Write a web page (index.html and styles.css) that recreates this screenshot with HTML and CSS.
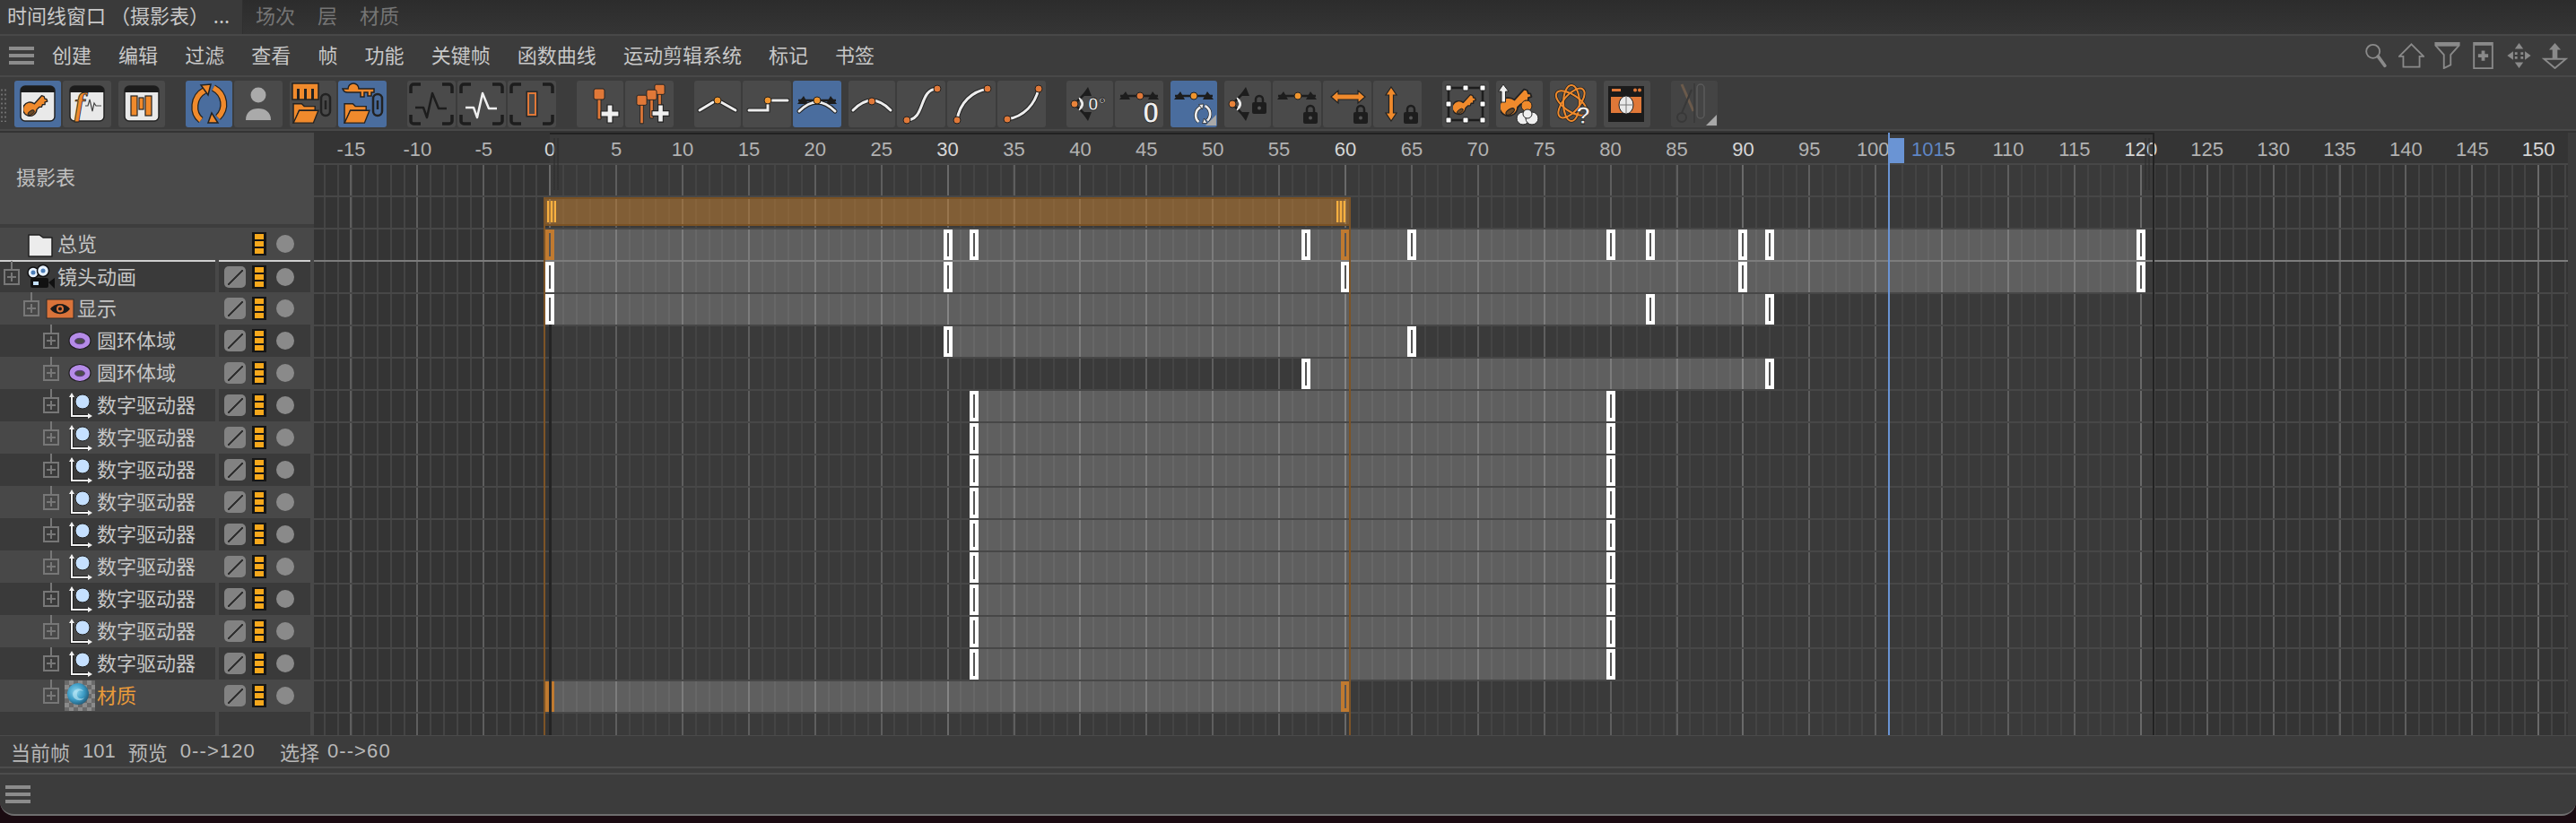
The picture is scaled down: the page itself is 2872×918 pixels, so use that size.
FILE: index.html
```html
<!DOCTYPE html>
<html lang="zh-CN">
<head>
<meta charset="utf-8">
<title>时间线窗口</title>
<link rel="stylesheet" href="styles.css">
</head>
<body>
<svg class="defs" width="0" height="0" aria-hidden="true">
  <defs>
    <symbol id="key" viewBox="0 0 32 32">
      <path d="M13 13 22 3l3 1 1 3 2 0 1 3-3 1 0 3-3 0-1 3-3 0-3 3A8.500 8.500 0 1 1 13 13Z" fill="#f08a2c" stroke="#222" stroke-width="1.500" stroke-linejoin="round"/>
      <ellipse cx="9" cy="24" rx="4.500" ry="2.200" transform="rotate(-35 9 24)" fill="#6b4a28" stroke="#222"/>
    </symbol>
    <symbol id="win" viewBox="0 0 54 52">
      <rect x="8" y="6" width="38" height="39" rx="5" fill="#e9e9e9" stroke="#222" stroke-width="1.500"/>
      <path d="M8 13v-2a5 5 0 0 1 5-5h28a5 5 0 0 1 5 5v2z" fill="#1c1c1c"/>
    </symbol>
    <symbol id="cycle" viewBox="0 0 52 52">
      <g fill="none" stroke="#222" stroke-width="8"><path d="M21 11C8 18 7 36 17 44"/><path d="M31 8C44 15 46 31 36 41"/></g>
      <g fill="none" stroke="currentColor" stroke-width="5.500"><path d="M21 11C8 18 7 36 17 44"/><path d="M31 8C44 15 46 31 36 41"/></g>
      <path d="M17 5 28 4 25 16Z" fill="currentColor" stroke="#222" stroke-width="1.500"/>
      <path d="M36 47 25 47 29 36Z" fill="currentColor" stroke="#222" stroke-width="1.500"/>
    </symbol>
    <symbol id="folder" viewBox="0 0 34 28">
      <path d="M2 26V3h10l3 3h13v5H9L3 26Z" fill="#f08a2c" stroke="#222" stroke-width="1.500"/>
      <path d="M9 11h23l-6 15H2Z" fill="#f08a2c" stroke="#222" stroke-width="1.500"/>
    </symbol>
    <symbol id="chain" viewBox="0 0 14 28">
      <rect x="2" y="2" width="10" height="24" rx="5" fill="none" stroke="#222" stroke-width="2.500"/>
      <path d="M7 9v10" stroke="#222" stroke-width="2.500"/>
    </symbol>
    <symbol id="brackets" viewBox="0 0 54 52">
      <path d="M15 4H7a3 3 0 0 0-3 3v7M39 4h8a3 3 0 0 1 3 3v7M4 38v7a3 3 0 0 0 3 3h8M50 38v7a3 3 0 0 1-3 3h-8" fill="none" stroke="#1d1d1d" stroke-width="3.500"/>
    </symbol>
    <symbol id="lock" viewBox="0 0 18 24">
      <path d="M5 11V7a4 4 0 0 1 8 0v4" fill="none" stroke="#1d1d1d" stroke-width="2.500"/>
      <rect x="1" y="10" width="16" height="13" rx="2" fill="#1d1d1d"/>
      <circle cx="9" cy="16.500" r="2" fill="#555"/>
    </symbol>
    <symbol id="plus" viewBox="0 0 24 24">
      <path d="M9 2h6v7h7v6h-7v7H9v-7H2V9h7Z" fill="#efefef" stroke="#222" stroke-width="1.200"/>
    </symbol>
    <symbol id="pin" viewBox="0 0 14 36">
      <path d="M5 12h4v23H5Z" fill="#e07838" stroke="#222"/>
      <rect x="1" y="1" width="12" height="12" rx="2" fill="#e07838" stroke="#222"/>
    </symbol>
    <symbol id="exts" viewBox="0 0 54 52">
      <path d="M6 17H48" stroke="#1d1d1d" stroke-width="2.500"/>
      <path d="M5 21 12 12 17 21ZM49 21 42 12 37 21Z" fill="#1d1d1d"/>
    </symbol>
    <symbol id="angle" viewBox="0 0 54 52">
      <path d="M11 25 24 12M11 27 24 40" stroke="#1d1d1d" stroke-width="2.500"/>
      <path d="M25 7 18 17 29 17ZM25 45 18 35 29 35Z" fill="#1d1d1d"/>
      <path d="M15 19C21 22 21 30 15 33L18 26Z" fill="#eee" stroke="#eee"/>
      <circle cx="10" cy="26" r="4" fill="#e8833a" stroke="#222"/>
    </symbol>
    <symbol id="corner" viewBox="0 0 12 12"><path d="M12 0V12H0Z" fill="#a8a8a8"/></symbol>
    <symbol id="torus" viewBox="0 0 34 34">
      <ellipse cx="17" cy="17" rx="12" ry="9.500" fill="#b58be8" stroke="#1e1e1e" stroke-width="1.200"/>
      <ellipse cx="17" cy="17.500" rx="5.500" ry="3.200" fill="#4c4c4c" stroke="#5c3d85"/>
    </symbol>
    <symbol id="driver" viewBox="0 0 34 34">
      <path d="M8 5V29H28" fill="none" stroke="#222" stroke-width="4"/>
      <path d="M8 5V29H28" fill="none" stroke="#f2f2f2" stroke-width="2"/>
      <path d="M5 8 8 3 11 8ZM26 26 31 29 26 32Z" fill="#f2f2f2"/>
      <circle cx="20" cy="13" r="8" fill="#c5e0ff" stroke="#222" stroke-width="1"/>
    </symbol>
    <symbol id="wave" viewBox="0 0 54 52">
      <path d="M9 30h9l4 11 6-27 7 17h9" fill="none" stroke-linejoin="round"/>
    </symbol>
    <pattern id="checker" width="10" height="10" patternUnits="userSpaceOnUse">
      <rect width="10" height="10" fill="#8b8b8b"/>
      <rect width="5" height="5" fill="#6a6a6a"/>
      <rect x="5" y="5" width="5" height="5" fill="#6a6a6a"/>
    </pattern>
    <radialGradient id="ball" cx=".4" cy=".4" r=".7">
      <stop offset="0" stop-color="#8fd6ee"/>
      <stop offset=".55" stop-color="#3b9ac4"/>
      <stop offset="1" stop-color="#1d4d68"/>
    </radialGradient>
  </defs>
</svg>

<div class="window">
  <div class="tabs">
    <div class="tab active">时间线窗口 （摄影表） ...</div>
    <div class="tab">场次</div>
    <div class="tab">层</div>
    <div class="tab">材质</div>
  </div>

  <div class="menu">
    <div class="burger"></div>
    <span class="menu-item">创建</span>
    <span class="menu-item">编辑</span>
    <span class="menu-item">过滤</span>
    <span class="menu-item">查看</span>
    <span class="menu-item">帧</span>
    <span class="menu-item">功能</span>
    <span class="menu-item">关键帧</span>
    <span class="menu-item">函数曲线</span>
    <span class="menu-item">运动剪辑系统</span>
    <span class="menu-item">标记</span>
    <span class="menu-item">书签</span>
    <div class="menu-tools">
      <svg class="mt" viewBox="0 0 26 32"><circle cx="10" cy="11" r="8" fill="none" stroke="#8a8a8a" stroke-width="2"/><path d="M16 17 24 28" stroke="#8a8a8a" stroke-width="4" stroke-linecap="round"/></svg>
      <svg class="mt" viewBox="0 0 32 32"><path d="M16 2 31 17H26V30H6V17H1Z" fill="none" stroke="#8a8a8a" stroke-width="2"/></svg>
      <svg class="mt" viewBox="0 0 30 32"><path d="M1 1H29V4L19 15V27L11 31V15L1 4Z" fill="none" stroke="#8a8a8a" stroke-width="2"/><path d="M1 1H29V5H1Z" fill="#8a8a8a"/></svg>
      <svg class="mt" viewBox="0 0 24 32"><path d="M1 1H23V31H1Z" fill="none" stroke="#8a8a8a" stroke-width="2"/><path d="M1 1H23V4H1ZM10 10h4v4h4v4h-4v4h-4v-4H6v-4h4Z" fill="#8a8a8a"/></svg>
      <svg class="mt" viewBox="0 0 30 32"><path d="M15 1 20 8H10ZM15 31 20 24H10ZM1 16 8 11V21ZM29 16 22 11V21ZM10 12h3v3h-3ZM17 12h3v3h-3ZM10 17h3v3h-3ZM17 17h3v3h-3Z" fill="#8a8a8a"/></svg>
      <svg class="mt" viewBox="0 0 28 32"><path d="M14 1 21 9H17V20H11V9H7Z" fill="#8a8a8a"/><path d="M1 20H27L14 31Z" fill="none" stroke="#8a8a8a" stroke-width="2"/></svg>
    </div>
  </div>

  <div class="toolbar">
    <div class="grip"></div>
    <div class="tgroup">
      <div class="btn on"><svg class="ic" viewBox="0 0 54 52"><use href="#win" width="54" height="52"/><use href="#key" x="11" y="14" width="30" height="29"/></svg></div>
      <div class="btn w"><svg class="ic" viewBox="0 0 54 52"><use href="#win" width="54" height="52"/><text class="f-glyph" x="13" y="38">f</text><path d="M25 28h3l2-7 3 13 2-9 2 3h6" fill="none" stroke="#444" stroke-width="1.200"/></svg></div>
    </div>
    <div class="tgroup">
      <div class="btn"><svg class="ic" viewBox="0 0 54 52"><use href="#win" width="54" height="52"/><g fill="#f08a2c" stroke="#222" stroke-width="1.200"><rect x="15" y="17" width="7" height="22"/><rect x="24" y="19" width="5" height="13"/><rect x="31" y="17" width="7" height="22"/></g></svg></div>
    </div>
    <div class="tgroup far">
      <div class="btn on tint-o"><svg class="ic" viewBox="0 0 54 52"><use href="#cycle" width="54" height="52"/></svg></div>
      <div class="btn w"><svg class="ic" viewBox="0 0 54 52"><circle cx="27" cy="16" r="8.500" fill="#aaa"/><path d="M13 44c0-9 6-13 14-13s14 4 14 13z" fill="#aaa"/></svg></div>
    </div>
    <div class="tgroup">
      <div class="btn"><svg class="ic" viewBox="0 0 54 52"><rect x="4" y="3" width="29" height="18" fill="#f08a2c" stroke="#222" stroke-width="1.500"/><path d="M9 21V9h3v12ZM17 21V9h3v12ZM25 21V9h3v12Z" fill="#222"/><use href="#folder" x="3" y="23" width="32" height="26"/><use href="#chain" x="34" y="13" width="14" height="28"/></svg></div>
      <div class="btn w on"><svg class="ic" viewBox="0 0 54 52"><path d="M5 9h6a6 6 0 0 1 12 0h17v4h-3v4h-4v-4h-4v5h-4v-5H11a6 6 0 0 1-6-4z" fill="#f08a2c" stroke="#222" stroke-width="1.500"/><use href="#folder" x="5" y="23" width="32" height="26"/><use href="#chain" x="37" y="13" width="14" height="28"/></svg></div>
    </div>
    <div class="tgroup far">
      <div class="btn w"><svg class="ic" viewBox="0 0 54 52"><use href="#brackets" width="54" height="52"/><use href="#wave" class="w-dark" width="54" height="52"/></svg></div>
      <div class="btn w"><svg class="ic" viewBox="0 0 54 52"><use href="#brackets" width="54" height="52"/><use href="#wave" class="w-light" width="54" height="52"/></svg></div>
      <div class="btn w"><svg class="ic" viewBox="0 0 54 52"><use href="#brackets" width="54" height="52"/><rect x="21" y="12" width="12" height="28" fill="#333" stroke="#222" stroke-width="1"/><rect x="23" y="14" width="8" height="24" fill="#4b4b4b" stroke="#e07838" stroke-width="2"/></svg></div>
    </div>
    <div class="tgroup far">
      <div class="btn"><svg class="ic" viewBox="0 0 54 52"><use href="#pin" x="19" y="8" width="14" height="36"/><use href="#plus" x="26" y="25" width="24" height="24"/></svg></div>
      <div class="btn w"><svg class="ic" viewBox="0 0 54 52"><use href="#pin" x="32" y="3" width="13" height="34"/><use href="#pin" x="23" y="9" width="13" height="34"/><use href="#pin" x="12" y="14" width="13" height="36"/><use href="#plus" x="28" y="25" width="23" height="23"/></svg></div>
    </div>
    <div class="tgroup far">
      <div class="btn"><svg class="ic" viewBox="0 0 54 52"><path class="wl-o" d="M7 33 22 24M47 33 31 24"/><path class="wl-i" d="M7 33 22 24M47 33 31 24"/><circle class="dot" cx="27" cy="22" r="4"/></svg></div>
      <div class="btn w"><svg class="ic" viewBox="0 0 54 52"><path class="wl-o" d="M33 22H50M28 27V33H7"/><path class="wl-i" d="M33 22H50M28 27V33H7"/><circle class="dot" cx="28" cy="22" r="4"/></svg></div>
      <div class="btn w on"><svg class="ic" viewBox="0 0 54 52"><use href="#exts" y="5" width="54" height="52"/><path class="wl-o" d="M7 34Q27 14 47 34"/><path class="wl-i" d="M7 34Q27 14 47 34"/><circle class="dot" cx="27" cy="22" r="4"/></svg></div>
    </div>
    <div class="tgroup">
      <div class="btn"><svg class="ic" viewBox="0 0 54 52"><path class="wl-o" d="M6 33Q27 11 48 33"/><path class="wl-i" d="M6 33Q27 11 48 33"/><circle class="dot dark" cx="27" cy="23" r="4"/></svg></div>
      <div class="btn w"><svg class="ic" viewBox="0 0 54 52"><path class="wl-o" d="M11 44C32 44 24 9 45 9"/><path class="wl-i" d="M11 44C32 44 24 9 45 9"/><circle class="dot dark" cx="11" cy="44" r="4"/><circle class="dot dark" cx="45" cy="9" r="4"/></svg></div>
      <div class="btn w"><svg class="ic" viewBox="0 0 54 52"><path class="wl-o" d="M11 44C14 24 28 12 45 9"/><path class="wl-i" d="M11 44C14 24 28 12 45 9"/><circle class="dot dark" cx="11" cy="44" r="4"/><circle class="dot dark" cx="45" cy="9" r="4"/></svg></div>
      <div class="btn w"><svg class="ic" viewBox="0 0 54 52"><path class="wl-o" d="M11 43C30 40 42 26 46 9"/><path class="wl-i" d="M11 43C30 40 42 26 46 9"/><circle class="dot dark" cx="11" cy="43" r="4"/><circle class="dot dark" cx="46" cy="9" r="4"/></svg></div>
    </div>
    <div class="tgroup far">
      <div class="btn"><svg class="ic" viewBox="0 0 54 52"><use href="#angle" width="54" height="52"/><text class="zero small" x="25" y="33">0°</text></svg></div>
      <div class="btn w"><svg class="ic" viewBox="0 0 54 52"><use href="#exts" width="54" height="52"/><circle class="dot dark" cx="28" cy="17" r="4"/><text class="zero big" x="31" y="47">0</text></svg></div>
    </div>
    <div class="tgroup">
      <div class="btn on tint-w"><svg class="ic" viewBox="0 0 54 52"><use href="#exts" width="54" height="52"/><circle class="dot" cx="27" cy="17" r="4"/><use href="#cycle" x="24" y="24" width="26" height="26"/><use href="#corner" x="40" y="38" width="12" height="12"/></svg></div>
    </div>
    <div class="tgroup">
      <div class="btn"><svg class="ic" viewBox="0 0 54 52"><use href="#angle" width="54" height="52"/><use href="#lock" x="31" y="14" width="18" height="24"/></svg></div>
      <div class="btn w"><svg class="ic" viewBox="0 0 54 52"><use href="#exts" width="54" height="52"/><circle class="dot" cx="28" cy="17" r="4"/><use href="#lock" x="33" y="25" width="18" height="24"/></svg></div>
      <div class="btn w"><svg class="ic" viewBox="0 0 54 52"><path d="M9 18 17 11V15H39V11L47 18 39 25V21H17V25Z" fill="#f08a2c" stroke="#222" stroke-width="1.200"/><use href="#lock" x="33" y="25" width="18" height="24"/></svg></div>
      <div class="btn w"><svg class="ic" viewBox="0 0 54 52"><path d="M20 7 26 16H22.500V36H26L20 45 14 36H17.500V16H14Z" fill="#f08a2c" stroke="#222" stroke-width="1.200"/><use href="#lock" x="33" y="25" width="18" height="24"/></svg></div>
    </div>
    <div class="tgroup far">
      <div class="btn"><svg class="ic" viewBox="0 0 54 52"><rect x="8" y="8" width="38" height="36" fill="none" stroke="#1d1d1d" stroke-width="2.500"/><use href="#key" x="13" y="13" width="28" height="28"/><g fill="#fff" stroke="#222"><rect x="5" y="5" width="6" height="6" rx="1"/><rect x="24" y="5" width="6" height="6" rx="1"/><rect x="43" y="5" width="6" height="6" rx="1"/><rect x="5" y="23" width="6" height="6" rx="1"/><rect x="43" y="23" width="6" height="6" rx="1"/><rect x="5" y="41" width="6" height="6" rx="1"/><rect x="24" y="41" width="6" height="6" rx="1"/><rect x="43" y="41" width="6" height="6" rx="1"/></g></svg></div>
    </div>
    <div class="tgroup">
      <div class="btn"><svg class="ic" viewBox="0 0 54 52"><use href="#key" x="6" y="6" width="38" height="38"/><path d="M9 4 15 12H11.500V24H7V12H3.500Z" fill="#efefef" stroke="#222"/><circle cx="35" cy="28" r="6" fill="#f08a2c" stroke="#222"/><g fill="#efefef" stroke="#222"><circle cx="31" cy="42" r="7"/><circle cx="41" cy="42" r="7"/><circle cx="36" cy="37" r="5"/></g></svg></div>
    </div>
    <div class="tgroup">
      <div class="btn"><svg class="ic" viewBox="0 0 54 52"><g fill="none"><g stroke="#222" stroke-width="3.500"><ellipse cx="25" cy="25" rx="20" ry="9" transform="rotate(35 25 25)"/><ellipse cx="25" cy="25" rx="20" ry="9" transform="rotate(-50 25 25)"/><ellipse cx="25" cy="25" rx="20" ry="9" transform="rotate(90 25 25)"/></g><g stroke="#f08a2c" stroke-width="2"><ellipse cx="25" cy="25" rx="20" ry="9" transform="rotate(35 25 25)"/><ellipse cx="25" cy="25" rx="20" ry="9" transform="rotate(-50 25 25)"/><ellipse cx="25" cy="25" rx="20" ry="9" transform="rotate(90 25 25)"/></g></g><text class="zero q" x="30" y="48">?</text></svg></div>
    </div>
    <div class="tgroup">
      <div class="btn"><svg class="ic" viewBox="0 0 54 52"><rect x="6" y="6" width="40" height="40" fill="#1b1b1b"/><rect x="10" y="9" width="10" height="3" fill="#e07838"/><circle cx="36" cy="10.500" r="2" fill="#e07838"/><circle cx="41" cy="10.500" r="2" fill="#e07838"/><rect x="9" y="18" width="34" height="18" fill="#e07838"/><ellipse cx="26" cy="27" rx="8" ry="10" fill="#e9e9e9" stroke="#222"/><path d="M26 17V37M18 27H34" stroke="#777"/></svg></div>
    </div>
    <div class="tgroup far">
      <div class="btn faded"><svg class="ic" viewBox="0 0 54 52"><path d="M13 4 26 34" stroke="#6b5a4b" stroke-width="3"/><path d="M24 10 13 36" stroke="#383838" stroke-width="2"/><circle cx="13" cy="41" r="5" fill="none" stroke="#383838" stroke-width="2"/><path d="M27 3V47" stroke="#383838" stroke-width="1.500"/><rect x="30" y="4" width="8" height="38" rx="4" fill="none" stroke="#5a5a5a" stroke-width="1.500"/><use href="#corner" x="40" y="38" width="12" height="12"/></svg></div>
    </div>
  </div>
  <div class="rule"></div>

  <div class="sheet">
    <div class="names">
      <div class="sheet-head"><span>摄影表</span></div>

      <div class="row lite">
        <div class="name l1"><span class="exp none"></span><svg class="oi" viewBox="0 0 34 34"><path d="M4 7H16L20 10H30V31H4Z" fill="#ececec" stroke="#1f1f1f" stroke-width="1.500" stroke-linejoin="round"/></svg><span class="txt">总览</span></div>
        <div class="ctl"><span class="slash blank"></span><span class="tri"></span><span class="dotc"></span></div>
      </div>

      <div class="row dark first">
        <div class="name l1"><span class="exp"></span><svg class="oi" viewBox="0 0 34 34"><rect x="6" y="18" width="20" height="11" rx="2" fill="#111"/><path d="M26 23 33 18V30Z" fill="#111"/><rect x="9" y="22" width="6" height="4" fill="#c5e0ff"/><circle cx="9" cy="12" r="6" fill="#e8f2ff" stroke="#111" stroke-width="1.500"/><circle cx="9" cy="12" r="2.500" fill="#4d7fb8"/><circle cx="20" cy="10" r="6.500" fill="#e8f2ff" stroke="#111" stroke-width="1.500"/><circle cx="20" cy="10" r="2.500" fill="#4d7fb8"/></svg><span class="txt">镜头动画</span></div>
        <div class="ctl"><span class="slash"></span><span class="tri"></span><span class="dotc"></span></div>
      </div>

      <div class="row lite">
        <div class="name l2"><span class="exp"></span><svg class="oi" viewBox="0 0 34 34"><rect x="2" y="7" width="30" height="21" fill="#d9733a" stroke="#2a2a2a"/><path d="M6 17.500C11 10 23 10 28 17.500 23 25 11 25 6 17.500Z" fill="#1a1a1a"/><circle cx="17" cy="17.500" r="4" fill="#d9733a"/><circle cx="17" cy="17.500" r="2" fill="#1a1a1a"/></svg><span class="txt">显示</span></div>
        <div class="ctl"><span class="slash"></span><span class="tri"></span><span class="dotc"></span></div>
      </div>

      <div class="row dark">
        <div class="name l3"><span class="exp"></span><svg class="oi"><use href="#torus" width="34" height="34"/></svg><span class="txt">圆环体域</span></div>
        <div class="ctl"><span class="slash"></span><span class="tri"></span><span class="dotc"></span></div>
      </div>
      <div class="row lite">
        <div class="name l3"><span class="exp"></span><svg class="oi"><use href="#torus" width="34" height="34"/></svg><span class="txt">圆环体域</span></div>
        <div class="ctl"><span class="slash"></span><span class="tri"></span><span class="dotc"></span></div>
      </div>

      <div class="row dark">
        <div class="name l3"><span class="exp"></span><svg class="oi"><use href="#driver" width="34" height="34"/></svg><span class="txt">数字驱动器</span></div>
        <div class="ctl"><span class="slash"></span><span class="tri"></span><span class="dotc"></span></div>
      </div>
      <div class="row lite">
        <div class="name l3"><span class="exp"></span><svg class="oi"><use href="#driver" width="34" height="34"/></svg><span class="txt">数字驱动器</span></div>
        <div class="ctl"><span class="slash"></span><span class="tri"></span><span class="dotc"></span></div>
      </div>
      <div class="row dark">
        <div class="name l3"><span class="exp"></span><svg class="oi"><use href="#driver" width="34" height="34"/></svg><span class="txt">数字驱动器</span></div>
        <div class="ctl"><span class="slash"></span><span class="tri"></span><span class="dotc"></span></div>
      </div>
      <div class="row lite">
        <div class="name l3"><span class="exp"></span><svg class="oi"><use href="#driver" width="34" height="34"/></svg><span class="txt">数字驱动器</span></div>
        <div class="ctl"><span class="slash"></span><span class="tri"></span><span class="dotc"></span></div>
      </div>
      <div class="row dark">
        <div class="name l3"><span class="exp"></span><svg class="oi"><use href="#driver" width="34" height="34"/></svg><span class="txt">数字驱动器</span></div>
        <div class="ctl"><span class="slash"></span><span class="tri"></span><span class="dotc"></span></div>
      </div>
      <div class="row lite">
        <div class="name l3"><span class="exp"></span><svg class="oi"><use href="#driver" width="34" height="34"/></svg><span class="txt">数字驱动器</span></div>
        <div class="ctl"><span class="slash"></span><span class="tri"></span><span class="dotc"></span></div>
      </div>
      <div class="row dark">
        <div class="name l3"><span class="exp"></span><svg class="oi"><use href="#driver" width="34" height="34"/></svg><span class="txt">数字驱动器</span></div>
        <div class="ctl"><span class="slash"></span><span class="tri"></span><span class="dotc"></span></div>
      </div>
      <div class="row lite">
        <div class="name l3"><span class="exp"></span><svg class="oi"><use href="#driver" width="34" height="34"/></svg><span class="txt">数字驱动器</span></div>
        <div class="ctl"><span class="slash"></span><span class="tri"></span><span class="dotc"></span></div>
      </div>
      <div class="row dark">
        <div class="name l3"><span class="exp"></span><svg class="oi"><use href="#driver" width="34" height="34"/></svg><span class="txt">数字驱动器</span></div>
        <div class="ctl"><span class="slash"></span><span class="tri"></span><span class="dotc"></span></div>
      </div>

      <div class="row lite">
        <div class="name l3"><span class="exp"></span><svg class="oi" viewBox="0 0 34 34"><rect width="34" height="34" fill="url(#checker)"/><circle cx="15" cy="15" r="12" fill="url(#ball)"/><path d="M9 15C10 9 18 7 21 12 17 10 13 12 14 17 15 21 20 21 22 19 19 25 9 22 9 15Z" fill="#bfe9f6" opacity=".6"/></svg><span class="txt sel">材质</span></div>
        <div class="ctl"><span class="slash"></span><span class="tri"></span><span class="dotc"></span></div>
      </div>

      <div class="row dark tail">
        <div class="name"></div>
        <div class="ctl"></div>
      </div>
    </div>

    <div class="timeline">
      <div class="preview"></div>
      <div class="ruler">
        <span class="lbl" style="--f:-15">-15</span><span class="lbl" style="--f:-10">-10</span><span class="lbl" style="--f:-5">-5</span><span class="lbl hi" style="--f:0">0</span>
        <span class="lbl" style="--f:5">5</span><span class="lbl" style="--f:10">10</span><span class="lbl" style="--f:15">15</span><span class="lbl" style="--f:20">20</span><span class="lbl" style="--f:25">25</span><span class="lbl hi" style="--f:30">30</span>
        <span class="lbl" style="--f:35">35</span><span class="lbl" style="--f:40">40</span><span class="lbl" style="--f:45">45</span><span class="lbl" style="--f:50">50</span><span class="lbl" style="--f:55">55</span><span class="lbl hi" style="--f:60">60</span>
        <span class="lbl" style="--f:65">65</span><span class="lbl" style="--f:70">70</span><span class="lbl" style="--f:75">75</span><span class="lbl" style="--f:80">80</span><span class="lbl" style="--f:85">85</span><span class="lbl hi" style="--f:90">90</span>
        <span class="lbl" style="--f:95">95</span><span class="lbl" style="--f:99.800">100</span><span class="lbl" style="--f:105.600">5</span><span class="lbl" style="--f:110">110</span><span class="lbl" style="--f:115">115</span><span class="lbl hi" style="--f:120">120</span>
        <span class="lbl" style="--f:125">125</span><span class="lbl" style="--f:130">130</span><span class="lbl" style="--f:135">135</span><span class="lbl" style="--f:140">140</span><span class="lbl" style="--f:145">145</span><span class="lbl hi" style="--f:150">150</span>
        <span class="cursor-box"></span><span class="cursor-num">101</span>
      </div>

      <div class="track top">
        <div class="selection"><span class="sgrip"></span><span class="sgrip"></span></div>
      </div>

      <div class="track"><span class="bar" style="--a:0;--b:120"></span><span class="key o" style="--f:0"></span><span class="key" style="--f:30"></span><span class="key" style="--f:32"></span><span class="key" style="--f:57"></span><span class="key o" style="--f:60"></span><span class="key" style="--f:65"></span><span class="key" style="--f:80"></span><span class="key" style="--f:83"></span><span class="key" style="--f:90"></span><span class="key" style="--f:92"></span><span class="key" style="--f:120"></span></div>
      <div class="track first"><span class="bar" style="--a:0;--b:120"></span><span class="key" style="--f:0"></span><span class="key" style="--f:30"></span><span class="key" style="--f:60"></span><span class="key" style="--f:90"></span><span class="key" style="--f:120"></span></div>
      <div class="track"><span class="bar" style="--a:0;--b:92"></span><span class="key" style="--f:0"></span><span class="key" style="--f:83"></span><span class="key" style="--f:92"></span></div>
      <div class="track"><span class="bar" style="--a:30;--b:65"></span><span class="key" style="--f:30"></span><span class="key" style="--f:65"></span></div>
      <div class="track"><span class="bar" style="--a:57;--b:92"></span><span class="key" style="--f:57"></span><span class="key" style="--f:92"></span></div>
      <div class="track"><span class="bar" style="--a:32;--b:80"></span><span class="key" style="--f:32"></span><span class="key" style="--f:80"></span></div>
      <div class="track"><span class="bar" style="--a:32;--b:80"></span><span class="key" style="--f:32"></span><span class="key" style="--f:80"></span></div>
      <div class="track"><span class="bar" style="--a:32;--b:80"></span><span class="key" style="--f:32"></span><span class="key" style="--f:80"></span></div>
      <div class="track"><span class="bar" style="--a:32;--b:80"></span><span class="key" style="--f:32"></span><span class="key" style="--f:80"></span></div>
      <div class="track"><span class="bar" style="--a:32;--b:80"></span><span class="key" style="--f:32"></span><span class="key" style="--f:80"></span></div>
      <div class="track"><span class="bar" style="--a:32;--b:80"></span><span class="key" style="--f:32"></span><span class="key" style="--f:80"></span></div>
      <div class="track"><span class="bar" style="--a:32;--b:80"></span><span class="key" style="--f:32"></span><span class="key" style="--f:80"></span></div>
      <div class="track"><span class="bar" style="--a:32;--b:80"></span><span class="key" style="--f:32"></span><span class="key" style="--f:80"></span></div>
      <div class="track"><span class="bar" style="--a:32;--b:80"></span><span class="key" style="--f:32"></span><span class="key" style="--f:80"></span></div>
      <div class="track"><span class="bar" style="--a:0;--b:60"></span><span class="key o" style="--f:0"></span><span class="key o" style="--f:60"></span></div>
      <div class="track tail"></div>

      <span class="hatch" style="--f:0"></span>
      <span class="hatch" style="--f:120"></span>
      <span class="zero-line"></span>
      <span class="sel-line" style="--f:0"></span>
      <span class="sel-line end" style="--f:60"></span>
      <span class="end-line"></span>
      <span class="playhead"></span>
    </div>
  </div>

  <div class="status">
    <span class="s1">当前帧</span><span class="s2">101</span><span class="s3">预览</span><span class="s4">0--&gt;120</span><span class="s5">选择</span><span class="s6">0--&gt;60</span>
  </div>
  <div class="foot">
    <div class="burger"></div>
  </div>
</div>
</body>
</html>
```

FILE: styles.css
```css
* { box-sizing: border-box; }

html, body { margin: 0; padding: 0; }

body {
  width: 2872px;
  height: 918px;
  overflow: hidden;
  background: #1a0b11;
  font-family: "Noto Sans CJK SC", "Liberation Sans", sans-serif;
  font-size: 22px;
  color: #c6c6c6;
}

.defs { position: absolute; }

.window {
  width: 2872px;
  height: 910px;
  display: flex;
  flex-direction: column;
  background: #3c3c3c;
  border-bottom: 2px solid #6e6e6e;
  border-radius: 0 0 16px 16px;
  overflow: hidden;
}

/* tab strip */
.tabs {
  height: 38px;
  flex: none;
  display: flex;
  align-items: flex-start;
  background: linear-gradient(#2c2c2c, #353535);
  color: #757575;
}
.tab { margin-left: 25px; line-height: 32px; }
.tab.active {
  width: 271px;
  height: 38px;
  margin: 0 14px 0 0;
  padding-left: 8px;
  background: #3a3a3a;
  color: #c8c8c8;
  border-right: 1px solid #303030;
  white-space: pre;
  overflow: hidden;
}
.tab.active + .tab { margin-left: 0; }

/* menu */
.menu {
  height: 46px;
  flex: none;
  display: flex;
  align-items: center;
  border-top: 2px solid #484848;
  padding-left: 10px;
  color: #c8c8c8;
}
.burger {
  width: 28px;
  height: 20px;
  flex: none;
  background: repeating-linear-gradient(#8c8c8c 0 4px, transparent 4px 8px);
}
.menu .burger { margin-right: 20px; }
.menu-item { margin-right: 30.100px; padding-bottom: 5px; line-height: 30px; white-space: nowrap; }
.menu-tools {
  margin-left: auto;
  margin-right: 9px;
  display: flex;
  align-items: center;
  gap: 11px;
}
.mt { height: 30px; width: 29px; display: block; }

/* toolbar */
.toolbar {
  height: 62px;
  flex: none;
  display: flex;
  align-items: flex-start;
  border-top: 2px solid #484848;
  border-bottom: 2px solid #484848;
  padding-top: 4px;
}
.grip {
  width: 8px;
  height: 38px;
  margin-top: 8px;
  flex: none;
  background: radial-gradient(circle, #707070 1px, transparent 1.200px) 0 0 / 4px 5px;
}
.tgroup { display: flex; gap: 2px; margin-left: 8px; }
.tgroup.far { margin-left: 23px; }
.btn {
  width: 52px;
  height: 52px;
  flex: none;
  display: flex;
  align-items: center;
  justify-content: center;
  background: #4a4a4a;
  border-radius: 3px;
  color: #f08a2c;
}
.btn.w { width: 54px; }
.btn.on { background: #4a6d9e; }
.btn.tint-o { color: #f08a2c; }
.btn.tint-w { color: #ececec; }
.ic { width: 54px; height: 52px; flex: none; display: block; overflow: visible; }
.f-glyph {
  font-family: "Liberation Serif", serif;
  font-style: italic;
  font-weight: 700;
  font-size: 36px;
  fill: #f08a2c;
  stroke: #222;
  stroke-width: .8px;
}
.w-dark { fill: none; stroke: #1d1d1d; stroke-width: 2.500px; }
.w-light { fill: none; stroke: #f0f0f0; stroke-width: 2.500px; }
.wl-o { fill: none; stroke: #222; stroke-width: 5px; stroke-linecap: round; }
.wl-i { fill: none; stroke: #ededed; stroke-width: 3px; stroke-linecap: round; }
.dot { fill: #f0952e; stroke: #222; stroke-width: 1px; }
.dot.dark { fill: #e07838; }
.zero {
  font-family: "Liberation Sans", sans-serif;
  font-weight: 700;
  fill: #efefef;
  stroke: #222;
  stroke-width: .8px;
}
.zero.small { font-size: 21px; }
.zero.big { font-size: 33px; }
.zero.q { font-size: 27px; }
.faded { background: #444; }

.rule { height: 2px; flex: none; background: #333; }

/* sheet */
.sheet {
  height: 672px;
  flex: none;
  display: flex;
}
.names {
  width: 350px;
  flex: none;
  background: #484848;
}
.sheet-head {
  height: 106px;
  padding: 33px 0 0 18px;
  background: linear-gradient(#4a4a4a 102px, #3d3d3d 102px);
  line-height: 30px;
  color: #c0c0c0;
}
.row {
  height: 36px;
  display: flex;
  width: 346px;
}
.row.tail { height: 26px; }
.name {
  width: 240px;
  height: 100%;
  display: flex;
  align-items: center;
  flex: none;
  white-space: nowrap;
}
.name.l1 { padding-left: 4px; }
.name.l2 { padding-left: 26px; }
.name.l3 { padding-left: 48px; }
.txt { padding-bottom: 4px; line-height: 30px; }
.ctl {
  width: 102px;
  margin-left: 4px;
  flex: none;
  display: flex;
  align-items: center;
  padding-left: 6px;
}
.dark .name, .dark .ctl { background: #3a3a3a; }
.first .name, .first .ctl { border-top: 2px solid #cfcfcf; }
.exp {
  width: 18px;
  height: 18px;
  flex: none;
  position: relative;
  border: 2px solid #777;
  background:
    linear-gradient(#777, #777) center / 10px 2px no-repeat,
    linear-gradient(#777, #777) center / 2px 10px no-repeat;
}
.exp::before {
  content: "";
  position: absolute;
  left: 6px;
  top: -11px;
  width: 2px;
  height: 9px;
  background: #777;
}
.exp.none { border: 0; background: none; }
.exp.none::before { display: none; }
.oi { width: 34px; height: 34px; flex: none; margin: 0 2px 0 6px; display: block; }
.sel { color: #e89a3a; }
.slash {
  width: 24px;
  height: 24px;
  flex: none;
  border-radius: 5px;
  background: linear-gradient(135deg, transparent calc(50% - 1px), #303030 calc(50% - 1px), #303030 calc(50% + 1px), transparent calc(50% + 1px)) center / 17px 17px no-repeat, #828282;
}
.slash.blank { background: none; }
.tri {
  width: 16px;
  height: 26px;
  flex: none;
  margin-left: 7px;
  padding: 2px 3px;
  background: repeating-linear-gradient(#f6a81c 0 6px, #151515 6px 8px) content-box, #151515;
}
.dotc {
  width: 20px;
  height: 20px;
  flex: none;
  margin-left: 11px;
  border-radius: 50%;
  background: #8a8a8a;
}

/* timeline */
.timeline {
  --x0: 263.200px;
  --fw: 14.780px;
  width: 2513px;
  flex: none;
  position: relative;
  background: #343434;
  overflow: hidden;
}
.preview {
  position: absolute;
  left: var(--x0);
  width: 1788px;
  top: 0;
  bottom: 0;
  background: rgba(255, 255, 255, .03);
  border-top: 2px solid #222;
}
.ruler { height: 34px; position: relative; }
.lbl {
  position: absolute;
  left: calc(var(--x0) + var(--f) * var(--fw));
  top: 0;
  transform: translateX(-50%);
  font-family: "Liberation Sans", sans-serif;
  line-height: 38px;
  color: #b2b2b2;
}
.lbl.hi { color: #d6d6d6; }
.cursor-box {
  position: absolute;
  left: calc(var(--x0) + 101 * var(--fw) - 1px);
  top: 6px;
  width: 18px;
  height: 28px;
  background: #6a94d4;
}
.cursor-num {
  position: absolute;
  left: calc(var(--x0) + 101 * var(--fw) + 25px);
  top: 0;
  height: 34px;
  line-height: 38px;
  font-family: "Liberation Sans", sans-serif;
  color: #5f86c4;
}
.track {
  --gx: calc(var(--x0) - 1px);
  height: 36px;
  position: relative;
  border-top: 2px solid #474747;
  background:
    repeating-linear-gradient(90deg, rgba(255, 255, 255, .07) var(--gx), rgba(255, 255, 255, .07) calc(var(--gx) + 2px), transparent calc(var(--gx) + 2px), transparent calc(var(--gx) + 30 * var(--fw))),
    repeating-linear-gradient(90deg, #5e5e5e var(--gx), #5e5e5e calc(var(--gx) + 2px), transparent calc(var(--gx) + 2px), transparent calc(var(--gx) + 5 * var(--fw))),
    repeating-linear-gradient(90deg, #444 var(--gx), #444 calc(var(--gx) + 2px), transparent calc(var(--gx) + 2px), transparent calc(var(--gx) + var(--fw)));
}
.track.top { height: 72px; }
.track.top::before {
  content: "";
  position: absolute;
  left: 0;
  right: 0;
  top: 34px;
  height: 2px;
  background: #474747;
}
.track.first { border-top-color: #7c7c7c; }
.track.tail { height: 26px; }
.selection {
  position: absolute;
  left: calc(var(--x0) - 7px);
  width: 900px;
  top: 36px;
  height: 32px;
  display: flex;
  justify-content: space-between;
  align-items: center;
  padding: 0 4px 0 2px;
  background: rgba(200, 130, 50, .5);
  border: 2px solid #7a5224;
}
.sgrip {
  width: 10px;
  height: 24px;
  background: repeating-linear-gradient(90deg, #f8b040 0 2px, #a87838 2px 4px);
}
.bar {
  position: absolute;
  left: calc(var(--x0) + var(--a) * var(--fw));
  width: calc((var(--b) - var(--a)) * var(--fw));
  top: 0;
  bottom: 0;
  background: rgba(255, 255, 255, .19);
}
.key {
  position: absolute;
  left: calc(var(--x0) + var(--f) * var(--fw) - 5px);
  top: 0;
  width: 10px;
  height: 34px;
  background: linear-gradient(#555, #555) center / 2px 26px no-repeat, #fff;
}
.key.o { background: linear-gradient(#555, #555) center / 2px 26px no-repeat, #c07a30; }

.hatch {
  position: absolute;
  left: calc(var(--x0) + var(--f) * var(--fw) + 4px);
  top: 6px;
  width: 8px;
  height: 58px;
  background: repeating-linear-gradient(90deg, #2c2c2c 0 2px, transparent 2px 4px);
  opacity: .55;
}
.zero-line {
  position: absolute;
  left: calc(var(--x0) - 1px);
  top: 214px;
  bottom: 0;
  width: 3px;
  background: #242424;
}
.sel-line {
  position: absolute;
  left: calc(var(--x0) + var(--f) * var(--fw) - 7px);
  top: 72px;
  bottom: 0;
  width: 2px;
  background: #7d5426;
}
.sel-line.end { margin-left: 11px; }
.end-line {
  position: absolute;
  left: 2050px;
  top: 0;
  bottom: 0;
  width: 2px;
  background: #222;
}
.playhead {
  position: absolute;
  left: calc(var(--x0) + 101 * var(--fw) - 1px);
  top: 0;
  bottom: 0;
  width: 2px;
  background: #6a94d4;
}

/* status + footer */
.status {
  height: 37px;
  flex: none;
  display: flex;
  align-items: center;
  border-top: 1px solid #4a4a4a;
  border-bottom: 2px solid #4c4c4c;
  padding-left: 12px;
  color: #b8b8b8;
  white-space: pre;
}
.s2, .s4, .s6 { font-family: "Liberation Sans", sans-serif; }
.s4, .s6 { letter-spacing: 1.100px; }
.s2 { margin-left: 14px; }
.s3 { margin-left: 14px; }
.s4 { margin-left: 14px; }
.s5 { margin-left: 27px; }
.s6 { margin-left: 9px; }
.foot {
  flex: 1;
  margin-top: 5px;
  display: flex;
  align-items: center;
  padding-left: 6px;
  border-top: 2px solid #4c4c4c;
}
```
